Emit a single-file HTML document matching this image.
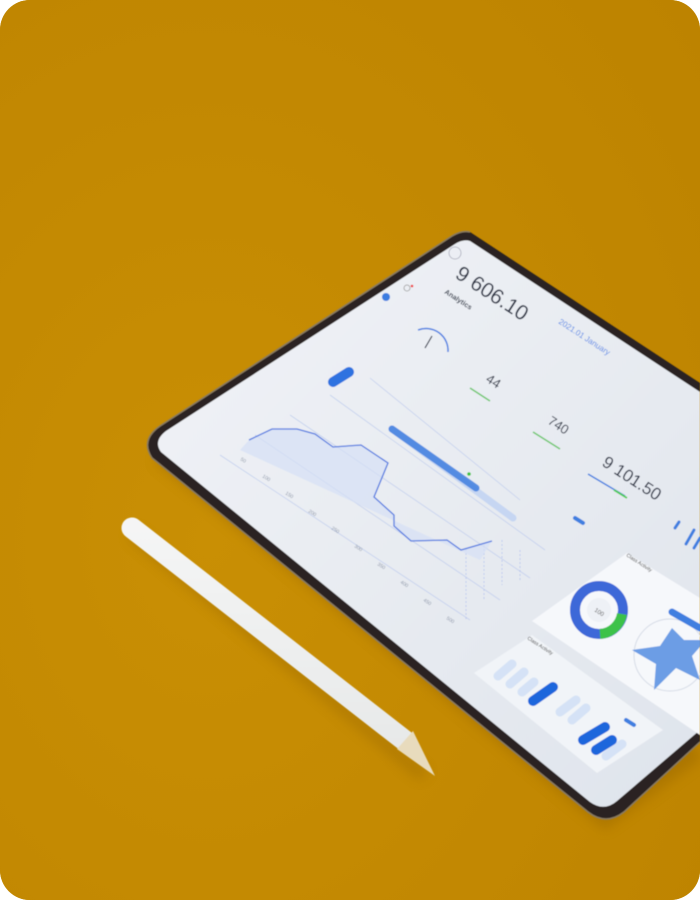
<!DOCTYPE html>
<html><head><meta charset="utf-8"><style>
html,body{margin:0;padding:0;background:#fff;}
.wrap{width:700px;height:900px;border-radius:30px;overflow:hidden;background:#c48a02;position:relative;}
svg{position:absolute;left:0;top:0;}
text{font-family:"Liberation Sans",sans-serif;}
</style></head><body>
<div class="wrap">
<svg width="700" height="900" viewBox="0 0 700 900">
<defs>
<radialGradient id="bg" cx="0.3" cy="0.6" r="0.9"><stop offset="0" stop-color="#c98f04"/><stop offset="1" stop-color="#bd8300"/></radialGradient>
<linearGradient id="scr" x1="0" y1="0" x2="1" y2="1"><stop offset="0" stop-color="#f1f3f7"/><stop offset="1" stop-color="#dfe4ec"/></linearGradient>
<linearGradient id="pen" x1="0" y1="0" x2="0" y2="1"><stop offset="0" stop-color="#fafafa"/><stop offset="1" stop-color="#d9dcdc"/></linearGradient>
<filter id="sh" x="-20%" y="-20%" width="140%" height="140%"><feGaussianBlur stdDeviation="6"/></filter>
<filter id="bl"><feGaussianBlur stdDeviation="0.5"/></filter>
</defs>
<rect width="700" height="900" fill="url(#bg)"/>
<path d="M155 462 L605 830 L700 760 L700 750 L165 445 Z" fill="#8a5c00" opacity="0.35" filter="url(#sh)"/>
<line x1="136" y1="536" x2="420" y2="772" stroke="#8a5c00" stroke-width="14" stroke-linecap="round" opacity="0.3" filter="url(#sh)"/>
<g filter="url(#bl)">
<path d="M470 232 Q462 230 452 236 L160 426 Q140 440 152 458 L588 812 Q606 826 624 812 L700 742 L700 383 Z" fill="#2a2420"/>
<path d="M470 232 Q462 230 452 236 L160 426 Q140 440 152 458 L588 812 Q606 826 624 812 L700 742" fill="none" stroke="#8a7a62" stroke-width="1.5"/>
<path d="M470 241 Q463 239 455 244 L166 431 Q153 441 161 452 L590 802 Q604 812 617 801 L700 730 L700 392 Z" fill="url(#scr)"/>
<polygon points="627,553 700,598 700,735 532,621" fill="#f6f8fb"/>
<polygon points="532,635 663,730 597,773 474,673" fill="#f1f4f8"/>
<g stroke="#c4d0ee" stroke-width="0.8">
<line x1="220" y1="455" x2="470" y2="620"/>
<line x1="255" y1="435" x2="500" y2="600"/>
<line x1="290" y1="415" x2="530" y2="578"/>
<line x1="330" y1="395" x2="545" y2="550"/>
<line x1="370" y1="378" x2="520" y2="500"/>
</g>
<g stroke="#b5c4ee" stroke-width="0.8" stroke-dasharray="2,2">
<line x1="466" y1="549" x2="466" y2="620"/>
<line x1="484" y1="545" x2="484" y2="600"/>
<line x1="502" y1="540" x2="502" y2="585"/>
<line x1="520" y1="550" x2="520" y2="580"/>
</g>
<polygon points="249,440 272,429 297,429 315,434 333,447 361,445 388,463 374,497 394,515 394,526 411,541 447,540 461,550 492,541 480,560 240,450" fill="#d6dff5" opacity="0.7"/>
<polyline points="249,440 272,429 297,429 315,434 333,447 361,445 388,463 374,497 394,515 394,526 411,541 447,540 461,550 492,541" fill="none" stroke="#4d78e0" stroke-width="1.3"/>
<g fill="#8d96a8" font-size="5">
<text x="240" y="460" transform="rotate(33 240 460)">50</text>
<text x="262" y="477" transform="rotate(33 262 477)">100</text>
<text x="285" y="494" transform="rotate(33 285 494)">150</text>
<text x="308" y="512" transform="rotate(33 308 512)">200</text>
<text x="331" y="529" transform="rotate(33 331 529)">250</text>
<text x="354" y="547" transform="rotate(33 354 547)">300</text>
<text x="377" y="565" transform="rotate(33 377 565)">350</text>
<text x="400" y="583" transform="rotate(33 400 583)">400</text>
<text x="423" y="601" transform="rotate(33 423 601)">450</text>
<text x="446" y="619" transform="rotate(33 446 619)">500</text>
</g>
<line x1="392" y1="429" x2="513" y2="518" stroke="#c6d6f2" stroke-width="7" stroke-linecap="round"/>
<line x1="392" y1="429" x2="476" y2="488" stroke="#3f7fe0" stroke-width="7" stroke-linecap="round" opacity="0.85"/>
<circle cx="469" cy="474" r="1.8" fill="#3ec23e"/>
<line x1="333" y1="382" x2="349" y2="372" stroke="#2f72e0" stroke-width="10" stroke-linecap="round"/>
<circle cx="386" cy="297" r="4" fill="#3a7be0"/>
<circle cx="407" cy="288" r="3" fill="none" stroke="#999" stroke-width="0.8"/>
<circle cx="412" cy="286" r="1.3" fill="#e33"/>
<path d="M418 330 A22 22 0 0 1 448 352" fill="none" stroke="#4a7fe2" stroke-width="1.5"/>
<line x1="425" y1="348" x2="432" y2="336" stroke="#2b3345" stroke-width="1.2"/>
<text x="454" y="277" font-size="21" fill="#2b3345" transform="rotate(33 454 277)">9 606.10</text>
<text x="444" y="293" font-size="7" font-weight="bold" fill="#39404f" transform="rotate(33 444 293)">Analytics</text>
<text x="558" y="323" font-size="8" fill="#5b8be6" transform="rotate(33 558 323)">2021.01  January</text>
<text x="485" y="381" font-size="13" fill="#2b3345" transform="rotate(33 485 381)">44</text>
<line x1="470" y1="388" x2="490" y2="401" stroke="#6cc76c" stroke-width="1.5"/>
<text x="547" y="423" font-size="13" fill="#2b3345" transform="rotate(33 547 423)">740</text>
<line x1="533" y1="432" x2="560" y2="449" stroke="#6cc76c" stroke-width="1.5"/>
<text x="601" y="465" font-size="17" fill="#2b3345" transform="rotate(33 601 465)">9 101.50</text>
<line x1="588" y1="474" x2="625" y2="496" stroke="#3f7fe0" stroke-width="1.5"/>
<line x1="614" y1="490" x2="627" y2="498" stroke="#4ccc4c" stroke-width="1.8"/>
<line x1="575" y1="518" x2="583" y2="523" stroke="#3f7fe0" stroke-width="4" stroke-linecap="round"/>
<g stroke="#3f7fe0" stroke-width="3" stroke-linecap="round">
<line x1="675" y1="528" x2="679" y2="522"/><line x1="686" y1="544" x2="694" y2="530"/><line x1="694" y1="548" x2="700" y2="538"/>
</g>
<circle cx="599" cy="610" r="24" fill="none" stroke="#3e68d8" stroke-width="10"/>
<path d="M622 614 A24 24 0 0 1 600 634" fill="none" stroke="#3ec24a" stroke-width="10"/>
<circle cx="599" cy="610" r="12" fill="#eef1f6"/>
<text x="594" y="611" font-size="6" fill="#555" transform="rotate(33 594 611)">100</text>
<circle cx="670" cy="655" r="36" fill="none" stroke="#d5dbe6" stroke-width="1"/>
<polygon points="672,628 684,640 706,640 692,656 700,680 676,668 654,690 656,664 632,650 660,646" fill="#4a86e0" opacity="0.8"/>
<line x1="672" y1="612" x2="700" y2="628" stroke="#3f7fe0" stroke-width="7" stroke-linecap="round"/>
<g stroke="#d5e2f6" stroke-width="9" stroke-linecap="round">
<line x1="498" y1="676" x2="512" y2="664"/><line x1="510" y1="684" x2="524" y2="672"/>
<line x1="522" y1="692" x2="534" y2="682"/><line x1="560" y1="712" x2="576" y2="700"/>
<line x1="572" y1="720" x2="586" y2="708"/><line x1="606" y1="756" x2="622" y2="744"/>
</g>
<g stroke="#1f66dc" stroke-width="10" stroke-linecap="round">
<line x1="533" y1="701" x2="553" y2="687"/>
<line x1="583" y1="740" x2="605" y2="727"/>
<line x1="596" y1="750" x2="612" y2="740"/>
</g>
<line x1="626" y1="720" x2="634" y2="725" stroke="#3f7fe0" stroke-width="4" stroke-linecap="round"/>
<text x="527" y="639" font-size="5" fill="#444" transform="rotate(33 527 639)">Class Activity</text>
<text x="626" y="556" font-size="5" fill="#444" transform="rotate(33 626 556)">Class Activity</text>
<circle cx="455" cy="253" r="6" fill="none" stroke="#aab" stroke-width="0.8"/>
<line x1="132" y1="528" x2="404" y2="740" stroke="url(#pen)" stroke-width="21" stroke-linecap="round"/>
<line x1="132" y1="528" x2="404" y2="740" stroke="#f2f3f3" stroke-width="21" stroke-linecap="round" opacity="0.6"/>
<polygon points="397,749 413,731 435,776" fill="#e8dbbd"/>
</g>
</svg>
</div>
</body></html>
